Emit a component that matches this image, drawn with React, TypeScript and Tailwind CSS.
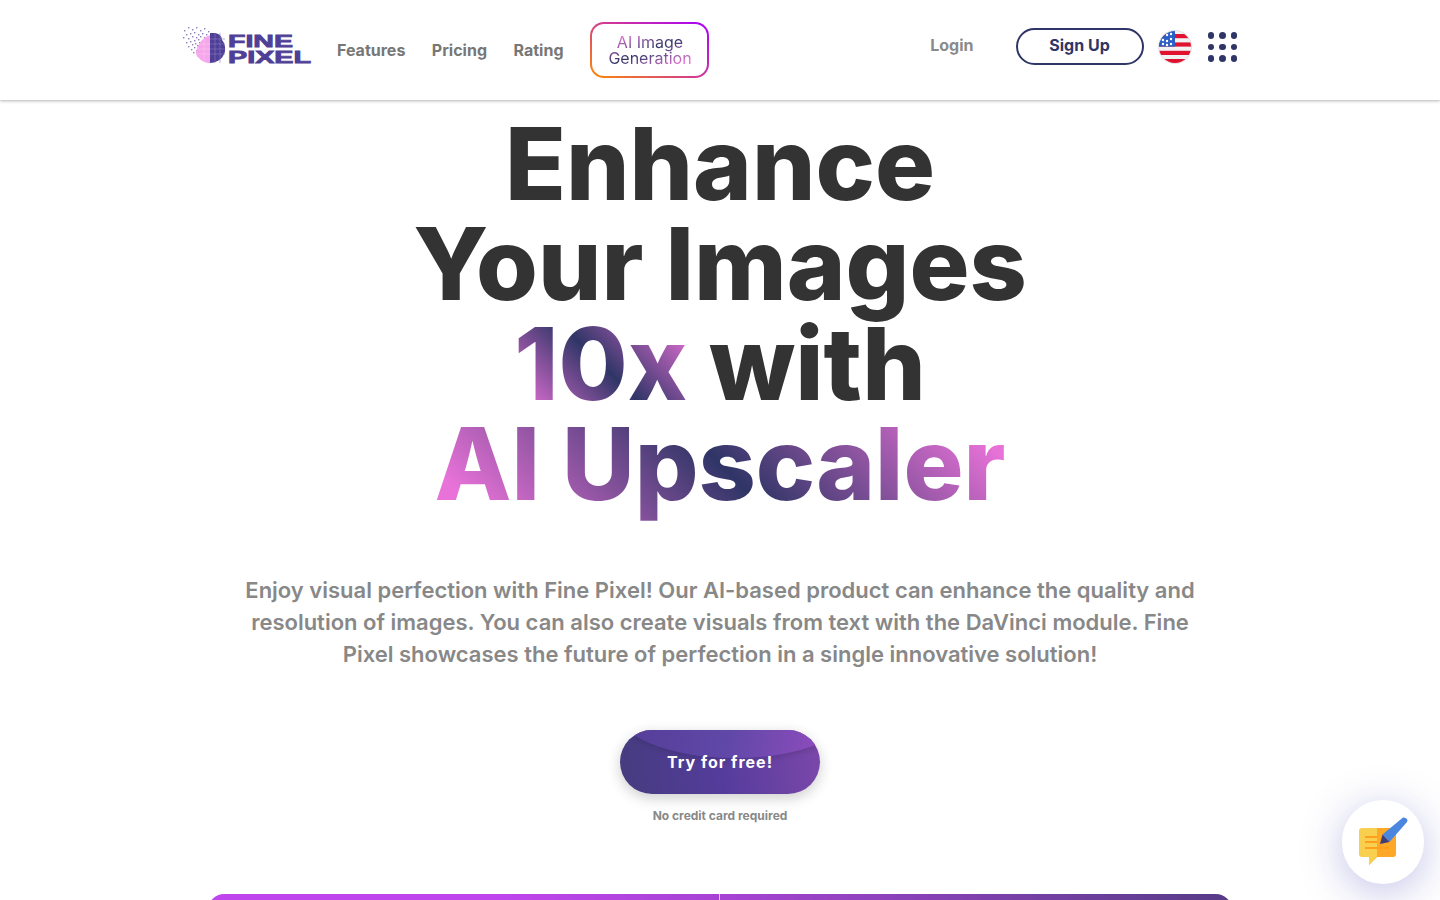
const inter = "font-['Inter',sans-serif]";

const dots: [number, number][] = [
  [2, 5], [6, 2], [10, 4], [14, 2], [18, 5], [22, 3], [26, 6], [4, 9], [8, 8], [12, 7], [16, 9], [20, 8],
  [24, 9], [1, 12], [6, 13], [10, 11], [14, 12], [18, 11], [22, 12], [26, 11], [4, 17], [8, 16], [12, 15],
  [16, 14], [20, 15], [24, 14], [28, 14], [6, 21], [10, 19], [13, 18], [17, 17], [21, 18], [25, 17], [9, 24],
  [12, 22], [15, 20], [19, 20], [23, 20], [11, 27], [14, 25], [17, 23], [21, 22],
];

function Logo() {
  return (
    <svg width="130" height="42" viewBox="0 0 130 42" className="mb-[8px] shrink-0">
      {dots.map(([x, y], i) => (
        <rect key={i} x={x} y={y} width="1.4" height="1.4" fill="#5b4a9e" opacity="0.7" />
      ))}
      <path d="M28 10 C22 12 17 17 15 24 C13 27 14 31 17 33 C19 36 24 38 28 38 Z" fill="#f6a6ea" />
      <path d="M28 8 L33 8 C38 9 40 12 40 15 C44 19 44 28 41 31 C39 35 33 38 28 38 Z" fill="#4f3f96" />
      <path d="M28 14 H43 M28 19 H43 M28 24 H43 M28 29 H43 M33 8 V38 M38 8 V38" stroke="#8478bd" strokeWidth="0.6" />
      <path d="M15 24 H28 M14 29 H28 M17 19 H28 M22 11 V37" stroke="#fbc6f3" strokeWidth="0.6" />
      <text x="46" y="21.6" fontFamily="'Liberation Sans',sans-serif" fontWeight="700" fontSize="17" textLength="65" lengthAdjust="spacingAndGlyphs" fill="#4f3f96" stroke="#4f3f96" strokeWidth="0.8">FINE</text>
      <text x="46" y="37.6" fontFamily="'Liberation Sans',sans-serif" fontWeight="700" fontSize="17" textLength="83" lengthAdjust="spacingAndGlyphs" fill="#4f3f96" stroke="#4f3f96" strokeWidth="0.8">PIXEL</text>
    </svg>
  );
}

function Flag() {
  return (
    <svg width="34" height="34" viewBox="0 0 34 34" className="shrink-0">
      <defs>
        <clipPath id="flag"><circle cx="17" cy="17" r="16" /></clipPath>
      </defs>
      <circle cx="17" cy="17" r="17" fill="#e2e2e4" />
      <g clipPath="url(#flag)">
        <rect width="34" height="34" fill="#f1f1f3" />
        <rect y="4" width="34" height="4.2" fill="#e0122f" />
        <rect y="12.4" width="34" height="4.2" fill="#e0122f" />
        <rect y="20.8" width="34" height="4.2" fill="#e0122f" />
        <rect y="29" width="34" height="5" fill="#e0122f" />
        <rect width="17" height="16.6" fill="#2b5fc7" />
        {[[5, 10], [9, 5], [9, 11], [13, 4], [13, 9], [13, 14], [5, 14], [9, 15]].map(([x, y], i) => (
          <circle key={i} cx={x} cy={y} r="1.2" fill="#fff" />
        ))}
      </g>
    </svg>
  );
}

function NoteIcon() {
  return (
    <svg width="50" height="50" viewBox="0 0 50 50">
      <path d="M1 14 Q1 11 4 11 H19 V40 H11 L11 48 L11 40 H4 Q1 40 1 37 Z" fill="#f8cf4f" />
      <path d="M19 11 H35 Q38 11 38 14 V37 Q38 40 35 40 H19 L11 48 V40 H19 Z" fill="#ffa726" />
      <path d="M11 40 H19 L11 48 Z" fill="#f8cf4f" />
      <path d="M7 20 H19 M7 25 H19 M7 31 H31" stroke="#ff9f1c" strokeWidth="1.8" />
      <path d="M24.5 17.5 L45 0.5 Q47 0 49 2 Q50 4 49 5 L31.5 25 Z" fill="#4a86e0" />
      <path d="M24.5 17.5 L22 27 L31.5 25 Z" fill="#3c3f78" />
    </svg>
  );
}

export default function App() {
  return (
    <div className={`relative h-screen overflow-hidden bg-white ${inter}`}>
      <header className="flex h-[100px] items-center pr-[203px] pl-[182px] shadow-[0_1px_3px_rgba(0,0,0,0.3)]">
        <Logo />
        <nav className="ml-[25px] flex items-center gap-[26.5px] text-[16px] font-bold text-[#777777]">
          <a>Features</a>
          <a>Pricing</a>
          <a>Rating</a>
        </nav>
        <div className="ml-[27px] rounded-[14px] bg-linear-[30deg] from-[#ff8a00] via-[#d23b8f] to-[#a800ff] p-[2px]">
          <div className="flex h-[52px] w-[115px] items-center justify-center rounded-[12px] bg-white">
            <span className="bg-linear-to-br from-[#e872d8] from-10% via-[#2f3566] to-[#e872d8] to-90% bg-clip-text text-center text-[16px] leading-[16px] font-normal text-transparent">
              AI Image
              <br />
              Generation
            </span>
          </div>
        </div>
        <div className="ml-auto flex items-center">
          <a className="-mt-[10px] text-[16px] font-bold text-[#8a8a8a]">Login</a>
          <button className="-mt-[7px] ml-[42px] h-[37px] w-[128px] rounded-full border-2 border-[#2f3566] pb-[4px] text-[16px] font-bold text-[#2f3566]">
            Sign Up
          </button>
          <div className="-mt-[6px] ml-[14px]">
            <Flag />
          </div>
          <div className="-mt-[6px] ml-[16px] grid grid-cols-3 gap-[5px]">
            {Array.from({ length: 9 }).map((_, i) => (
              <span key={i} className="h-[6.5px] w-[6.5px] rounded-full bg-[#2f3566]" />
            ))}
          </div>
        </div>
      </header>

      <main className="flex flex-col items-center">
        <h1 className="mt-[14px] text-center text-[100px] leading-[100px] font-extrabold text-[#333333]">
          Enhance
          <br />
          Your Images
          <br />
          <span className="bg-linear-[45deg] from-[#e872d8] from-8% via-[#2f3566] to-[#e872d8] to-92% bg-clip-text text-transparent">10x</span> with
          <br />
          <span className="bg-linear-[45deg] from-[#e872d8] from-8% via-[#2f3566] to-[#e872d8] to-92% bg-clip-text text-transparent">AI Upscaler</span>
        </h1>
        <p className="mt-[60px] w-[960px] text-center text-[22px] leading-[32px] font-semibold text-[#888888]">
          Enjoy visual perfection with Fine Pixel! Our AI-based product can enhance the quality and resolution of images. You can also create visuals from text with the DaVinci module. Fine Pixel showcases the future of perfection in a single innovative solution!
        </p>
        <button className="relative mt-[60px] h-[64px] w-[200px] overflow-hidden rounded-full bg-linear-[80deg] from-[#453c7e] via-[#553c9c] via-50% to-[#7c48aa] shadow-[0_4px_14px_rgba(0,0,0,0.2)]">
          <span className="absolute -top-[72px] -left-[5px] h-[100px] w-[240px] rounded-[50%] bg-linear-[100deg] from-[#523c94] via-[#6048a8] to-[#a04dc4] shadow-[0_2px_6px_rgba(0,0,0,0.15)]" />
          <span className="relative text-[16px] font-bold tracking-[1px] text-white">Try for free!</span>
        </button>
        <p className="mt-[14px] text-[12px] leading-[16px] font-bold text-[#888888]">No credit card required</p>
      </main>

      <div className="absolute top-[894px] left-[208px] flex h-[20px] w-[1024px] overflow-hidden rounded-t-[16px]">
        <div className="h-full w-[511px] bg-linear-to-r from-[#c044ee] from-55% to-[#a743d4]" />
        <div className="h-full w-[1px] bg-[#e3c9ee]" />
        <div className="h-full flex-1 bg-linear-to-r from-[#a743d4] to-[#563b87]" />
      </div>

      <button className="absolute top-[800px] left-[1342px] flex h-[84px] w-[82px] items-center justify-center rounded-full bg-white shadow-[0_8px_40px_rgba(80,80,190,0.35)]">
        <NoteIcon />
      </button>
    </div>
  );
}
